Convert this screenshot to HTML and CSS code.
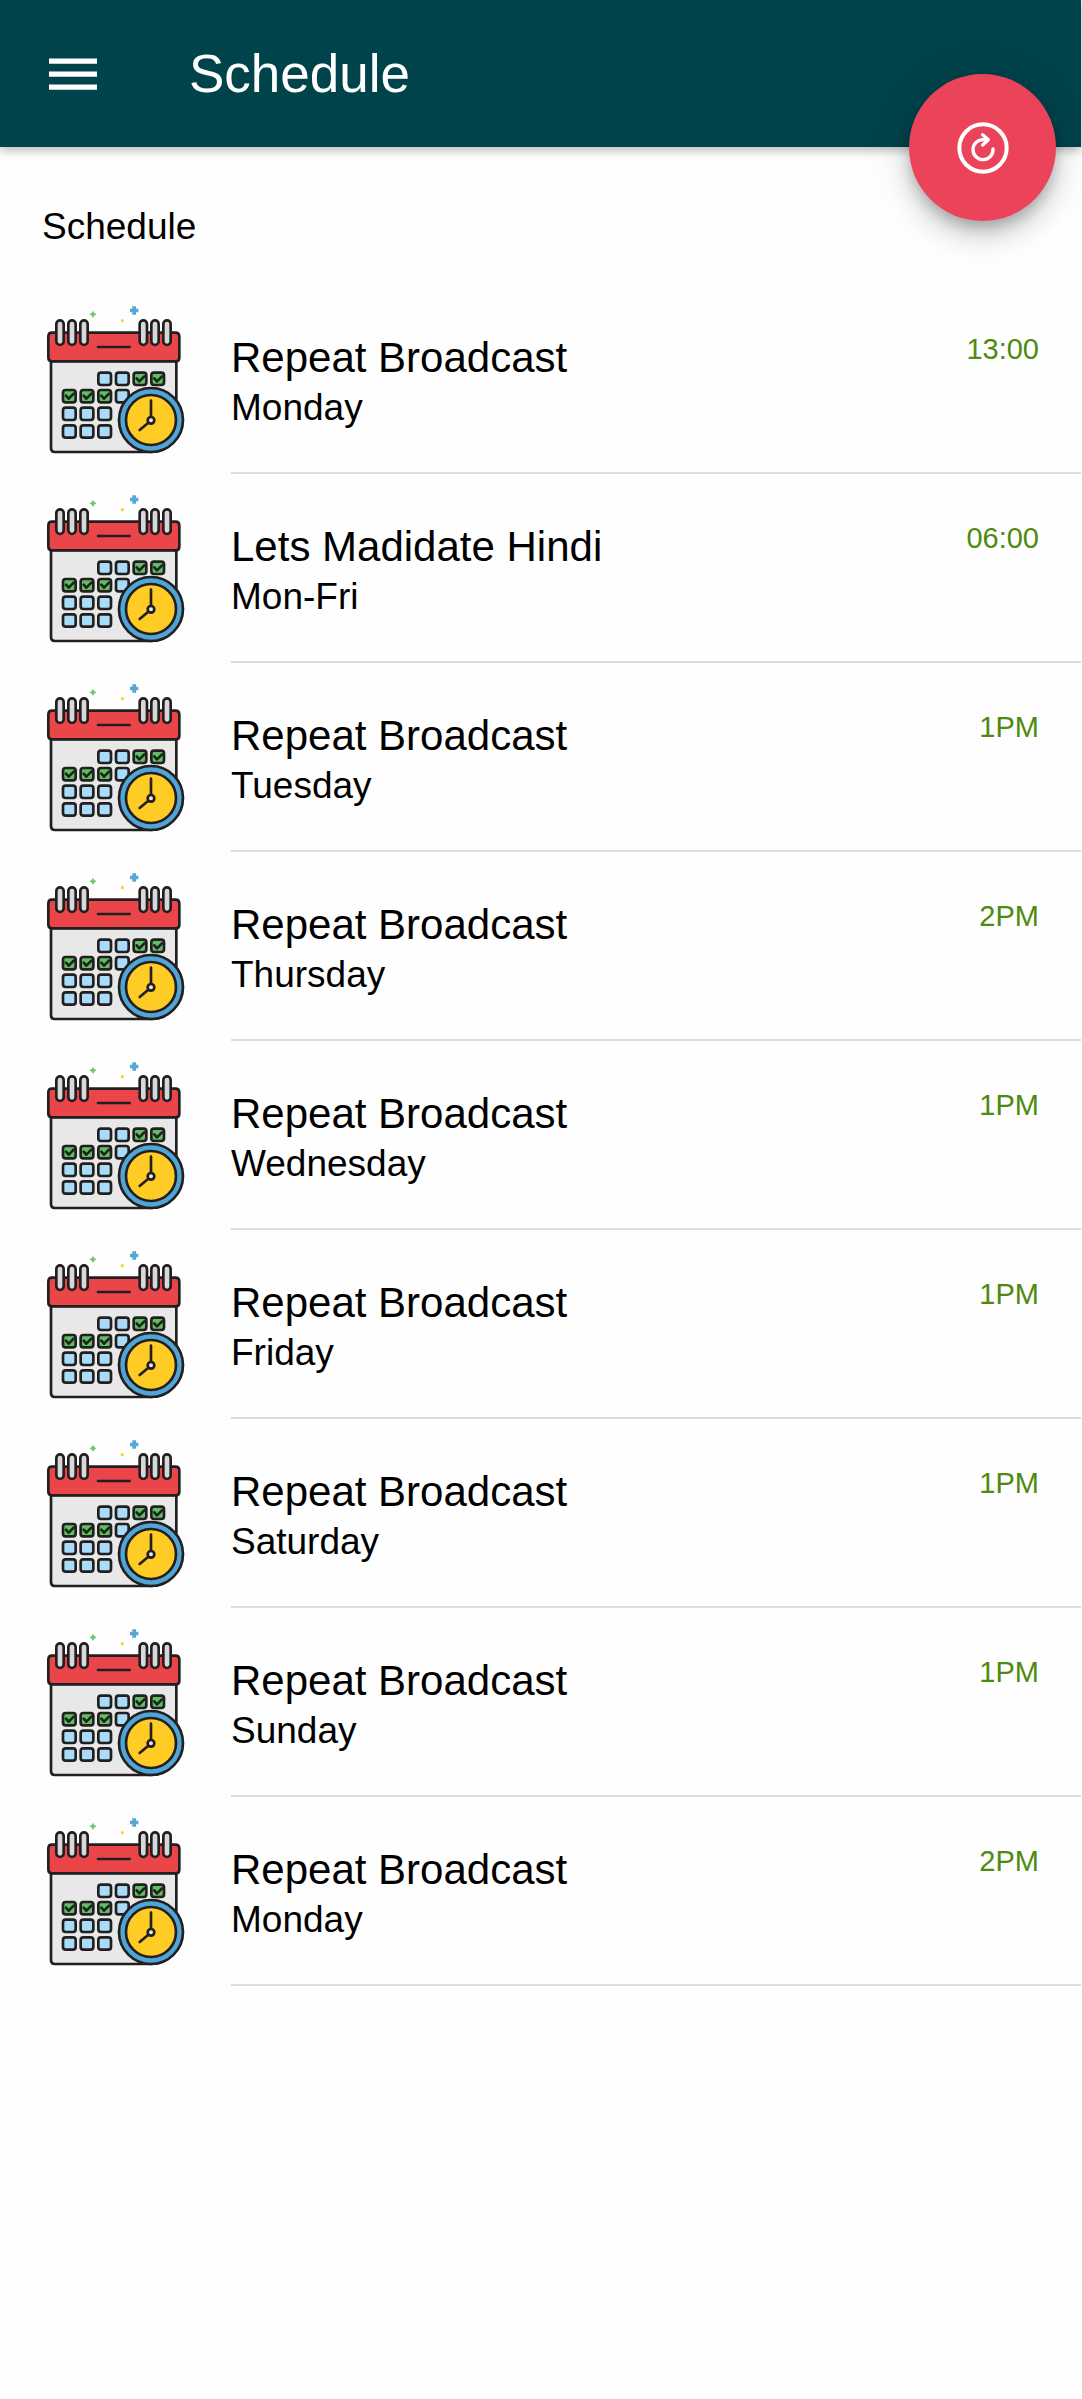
FILE: index.html
```html
<!DOCTYPE html>
<html lang="en">
<head>
<meta charset="utf-8">
<meta name="viewport" content="width=device-width, initial-scale=1">
<title>Schedule</title>
<link rel="stylesheet" href="styles.css">
</head>
<body>
<svg class="sprite" width="0" height="0" aria-hidden="true">
  <defs>
    <g id="ring"><rect x="-11" y="1" width="22" height="74" rx="11" fill="#d8d7da"/></g>
    <g id="day"><rect width="38" height="37" rx="8" fill="#a8dcf8"/></g>
    <g id="done"><rect width="38" height="37" rx="8" fill="#5cc25f"/><path d="M9 17l8 9 15-15" fill="none"/></g>
    <symbol id="calendar" viewBox="36 36 450 465">
      <path d="M189 62q2 8 11 11q-9 3-11 11q-2-8-11-11q9-3 11-11z" fill="#6cc872"/>
      <path d="M307 49h11v7h7v11h-7v7h-11v-7h-7v-11h7z" fill="#54a7d6"/>
      <circle cx="277" cy="92" r="5" fill="#fdce3a"/>
      <g stroke="#231f20" stroke-width="8" stroke-linecap="round" stroke-linejoin="round">
        <path d="M63 213h376v177q0 96-76 96H74q-11 0-11-11z" fill="#e8e8e9"/>
        <path d="M66 128h370q12 0 12 12v63q0 11-11 11H65q-10 0-10-12v-62q0-12 11-12z" fill="#ea4548"/>
        <path d="M204 171h95"/>
        <use href="#ring" x="90" y="90"/><use href="#ring" x="126" y="90"/><use href="#ring" x="162" y="90"/>
        <use href="#ring" x="340" y="90"/><use href="#ring" x="375" y="90"/><use href="#ring" x="411" y="90"/>
        <use href="#day" x="205" y="248"/><use href="#day" x="258" y="248"/><use href="#done" x="311" y="248"/><use href="#done" x="364" y="248"/>
        <use href="#done" x="99" y="300"/><use href="#done" x="152" y="300"/><use href="#done" x="205" y="300"/><use href="#day" x="258" y="300"/>
        <use href="#day" x="99" y="353"/><use href="#day" x="152" y="353"/><use href="#day" x="205" y="353"/>
        <use href="#day" x="99" y="406"/><use href="#day" x="152" y="406"/><use href="#day" x="205" y="406"/>
        <circle cx="363" cy="390" r="96" fill="#4fa5d5"/>
        <circle cx="363" cy="390" r="75" fill="#ffcc26"/>
        <path d="M363 332v48M355 398l-26 22" fill="none"/>
        <circle cx="363" cy="391" r="10" fill="#e6e6e8"/>
      </g>
    </symbol>
  </defs>
</svg>

<header class="toolbar">
  <button class="menu" type="button" aria-label="Menu">
    <svg width="48" height="32" viewBox="0 0 48 32" fill="#fff"><path d="M0 .5h48v5.3H0zM0 13.5h48v5.3H0zM0 26.5h48v5.3H0z"/></svg>
  </button>
  <h1 class="toolbar-title">Schedule</h1>
  <button class="fab" type="button" aria-label="Refresh">
    <svg width="52" height="52" viewBox="291 243 156 156" fill="none" stroke="#fff" stroke-linecap="round" stroke-linejoin="round">
      <circle cx="369" cy="321" r="71" stroke-width="12"/>
      <path d="M399 324a30 30 0 1 1-30-28h14M368 281l17 15-17 16" stroke-width="10"/>
    </svg>
  </button>
</header>

<main>
  <h2 class="list-header">Schedule</h2>
  <ul class="list">
    <li class="item"><svg class="thumb"><use href="#calendar"/></svg><div class="body"><div class="label"><h3 class="name">Repeat Broadcast</h3><p class="day">Monday</p></div><span class="time">13:00</span></div></li>
    <li class="item"><svg class="thumb"><use href="#calendar"/></svg><div class="body"><div class="label"><h3 class="name">Lets Madidate Hindi</h3><p class="day">Mon-Fri</p></div><span class="time">06:00</span></div></li>
    <li class="item"><svg class="thumb"><use href="#calendar"/></svg><div class="body"><div class="label"><h3 class="name">Repeat Broadcast</h3><p class="day">Tuesday</p></div><span class="time">1PM</span></div></li>
    <li class="item"><svg class="thumb"><use href="#calendar"/></svg><div class="body"><div class="label"><h3 class="name">Repeat Broadcast</h3><p class="day">Thursday</p></div><span class="time">2PM</span></div></li>
    <li class="item"><svg class="thumb"><use href="#calendar"/></svg><div class="body"><div class="label"><h3 class="name">Repeat Broadcast</h3><p class="day">Wednesday</p></div><span class="time">1PM</span></div></li>
    <li class="item"><svg class="thumb"><use href="#calendar"/></svg><div class="body"><div class="label"><h3 class="name">Repeat Broadcast</h3><p class="day">Friday</p></div><span class="time">1PM</span></div></li>
    <li class="item"><svg class="thumb"><use href="#calendar"/></svg><div class="body"><div class="label"><h3 class="name">Repeat Broadcast</h3><p class="day">Saturday</p></div><span class="time">1PM</span></div></li>
    <li class="item"><svg class="thumb"><use href="#calendar"/></svg><div class="body"><div class="label"><h3 class="name">Repeat Broadcast</h3><p class="day">Sunday</p></div><span class="time">1PM</span></div></li>
    <li class="item"><svg class="thumb"><use href="#calendar"/></svg><div class="body"><div class="label"><h3 class="name">Repeat Broadcast</h3><p class="day">Monday</p></div><span class="time">2PM</span></div></li>
  </ul>
</main>
</body>
</html>
```
FILE: styles.css
```css
* {
  box-sizing: border-box;
}

body {
  margin: 0;
  padding-right: 1px;
  min-height: 100vh;
  background: #fefefe;
  color: #000;
  font-family: "Liberation Sans", Arial, sans-serif;
}

h1, h2, h3, p, ul {
  margin: 0;
  padding: 0;
  font-weight: 400;
}

button {
  border: 0;
  padding: 0;
  background: none;
  cursor: pointer;
}

svg {
  display: block;
}

.sprite {
  position: absolute;
}

.toolbar {
  position: relative;
  display: flex;
  align-items: center;
  gap: 92px;
  height: 147px;
  padding-left: 49px;
  background: #00434b;
  color: #fff;
  box-shadow: 0 3px 10px rgba(0, 0, 0, 0.3);
}

.toolbar-title {
  font-size: 53px;
  line-height: 60px;
}

/* Straddles the toolbar's bottom edge */
.fab {
  position: absolute;
  right: 25px;
  bottom: -74px;
  display: grid;
  place-items: center;
  width: 147px;
  height: 147px;
  border-radius: 50%;
  background: #eb445a;
  box-shadow: 0 8px 13px -2px rgba(0, 0, 0, 0.2), 0 16px 26px rgba(0, 0, 0, 0.14), 0 3px 47px rgba(0, 0, 0, 0.12);
}

.list-header {
  padding: 56px 42px 34px;
  font-size: 37px;
  line-height: 48px;
}

.list {
  list-style: none;
}

.item {
  display: flex;
  gap: 39px;
  padding-left: 42px;
}

.thumb {
  flex: none;
  width: 150px;
  height: 155px;
  margin-top: 17px;
}

.body {
  flex: 1;
  display: flex;
  justify-content: space-between;
  align-items: flex-start;
  padding: 46px 42px 39px 0;
  border-bottom: 2px solid #dcdcdc;
}

.label {
  padding-top: 2px;
}

.name {
  font-size: 42px;
  line-height: 50px;
}

.day {
  font-size: 37px;
  line-height: 50px;
}

.time {
  color: #4f8a10;
  font-size: 29px;
  line-height: 36px;
}
```
